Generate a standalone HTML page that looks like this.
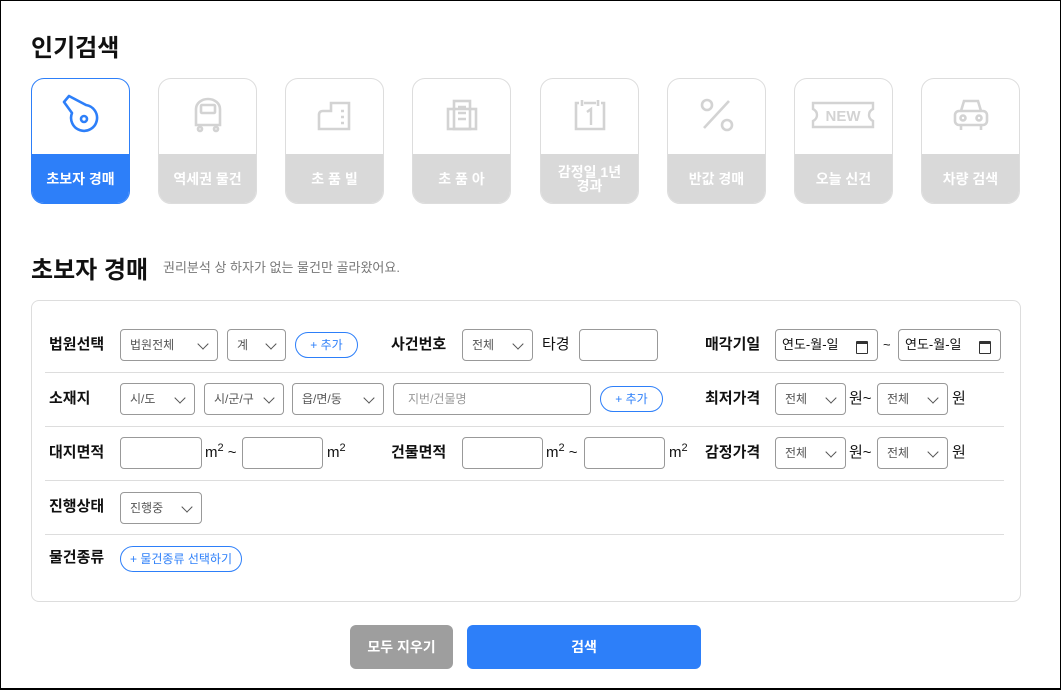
<!DOCTYPE html>
<html><head><meta charset="utf-8"><style>
*{box-sizing:border-box;margin:0;padding:0}
body{width:1061px;height:690px;background:#fff;font-family:"Liberation Sans","Noto Sans CJK KR",sans-serif;position:relative;overflow:hidden;color:#111}
.frame{position:absolute;left:0;top:0;width:1061px;height:690px;border:1px solid #000;border-bottom:2px solid #000}
.a{position:absolute}
h1{position:absolute;font-size:24px;font-weight:700;color:#111}
.card{position:absolute;top:78px;width:99px;height:126px;border:1px solid #ddd;border-radius:13px;overflow:hidden;background:#fff}
.card .lb{position:absolute;left:0;right:0;top:75px;bottom:0;background:#d9d9d9;color:#fff;font-weight:700;font-size:14px;display:flex;align-items:center;justify-content:center;text-align:center;line-height:14px}
.card svg{position:absolute;left:29px;top:16px}
.card.on{border-color:#2d7ff9}
.card.on .lb{background:#2d7ff9}
.panel{position:absolute;left:31px;top:300px;width:990px;height:302px;border:1px solid #ddd;border-radius:8px}
.sep{position:absolute;left:45px;width:959px;height:1px;background:#ddd}
.lab{position:absolute;font-size:15px;font-weight:700;color:#111;line-height:20px}
.sel,.inp{position:absolute;height:32px;border:1px solid #999;border-radius:4px;font-size:12px;color:#555;padding-left:9px;line-height:30px;background:#fff}
.sel::after{content:"";position:absolute;right:10px;top:10px;width:7px;height:7px;border-right:1.3px solid #555;border-bottom:1.3px solid #555;transform:rotate(45deg)}
.btn{position:absolute;height:26px;border:1px solid #2d7ff9;border-radius:13px;color:#2d7ff9;font-size:12px;text-align:center;line-height:24px;background:#fff}
.t{position:absolute;font-size:15px;color:#111;line-height:20px}
.t sup{font-size:11px;vertical-align:6px;line-height:0}
.date{position:absolute;height:32px;border:1px solid #999;border-radius:4px;font-size:13px;color:#111;padding-left:6px;line-height:30px}
.date::after{content:"";position:absolute;right:9px;top:11px;width:10px;height:9px;border:1.5px solid #333;border-top-width:3px;border-radius:1px}
</style></head><body>
<div class="frame"></div>
<h1 style="left:31px;top:28px">인기검색</h1>

<div class="card on" style="left:31px"><svg width="40" height="44" viewBox="0 0 40 44" style="left:30px;top:15px" fill="none" stroke="#2d7ff9" stroke-width="2.6" stroke-linejoin="round"><path d="M2 8 L7 2 L24 11 A13 13 0 1 1 10 19 Z"/><circle cx="22" cy="25" r="3"/></svg><div class="lb">초보자 경매</div></div>
<div class="card" style="left:158px"><svg width="40" height="40" viewBox="0 0 40 40" fill="none" stroke="#d3d3d3" stroke-width="2.6"><path d="M8 30 V14 A12 10 0 0 1 32 14 V30 Z"/><rect x="13" y="10" width="14" height="8" rx="1"/><circle cx="12" cy="34" r="2"/><circle cx="28" cy="34" r="2"/></svg><div class="lb">역세권 물건</div></div>
<div class="card" style="left:285px"><svg width="40" height="40" viewBox="0 0 40 40" fill="none" stroke="#d3d3d3" stroke-width="2.6"><path d="M4 34 V20 Q4 16 8 16 H16 V8 H34 V34 Z"/><path d="M26 16h3M26 22h3M26 28h3"/></svg><div class="lb">초 품 빌</div></div>
<div class="card" style="left:412px"><svg width="40" height="40" viewBox="0 0 40 40" fill="none" stroke="#d3d3d3" stroke-width="2.6"><rect x="6" y="14" width="28" height="20"/><rect x="12" y="6" width="16" height="28"/><path d="M16 12h8M16 18h8M16 24h8"/></svg><div class="lb">초 품 아</div></div>
<div class="card" style="left:540px"><svg width="40" height="40" viewBox="0 0 40 40" fill="none" stroke="#d3d3d3" stroke-width="2.6"><path d="M9 8 H6 V34 H34 V8 H31 M14 8 H26 M12 5 V11 M28 5 V11"/><path d="M17 17 L21 14 V30" stroke-width="2.4"/></svg><div class="lb">감정일 1년<br>경과</div></div>
<div class="card" style="left:667px"><svg width="40" height="40" viewBox="0 0 40 40" fill="none" stroke="#d3d3d3" stroke-width="2.6"><circle cx="10" cy="10" r="5"/><circle cx="30" cy="30" r="5"/><path d="M32 6 L7 33"/></svg><div class="lb">반값 경매</div></div>
<div class="card" style="left:794px"><svg width="70" height="40" viewBox="0 0 70 40" style="left:14px" fill="none" stroke="#d3d3d3" stroke-width="2.4"><path d="M4 8 H64 V14 Q60 16 60 20 Q60 24 64 26 V32 H4 V26 Q8 24 8 20 Q8 16 4 14 Z"/><text x="34" y="26" text-anchor="middle" font-family="Liberation Sans" font-weight="700" font-size="15" fill="#d3d3d3" stroke="none">NEW</text></svg><div class="lb">오늘 신건</div></div>
<div class="card" style="left:921px"><svg width="40" height="40" viewBox="0 0 40 40" fill="none" stroke="#d3d3d3" stroke-width="2.6"><path d="M10 16 L13 6 H27 L30 16"/><rect x="4" y="16" width="32" height="14" rx="4"/><circle cx="12" cy="23" r="2.5"/><circle cx="28" cy="23" r="2.5"/><path d="M10 30v5M30 30v5"/></svg><div class="lb">차량 검색</div></div>

<h1 style="left:31px;top:250px">초보자 경매</h1>
<div class="a" style="left:163px;top:257px;font-size:13px;color:#777">권리분석 상 하자가 없는 물건만 골라왔어요.</div>

<div class="panel"></div>
<div class="sep" style="top:372px"></div>
<div class="sep" style="top:426px"></div>
<div class="sep" style="top:480px"></div>
<div class="sep" style="top:534px"></div>

<div class="lab" style="left:49px;top:335px">법원선택</div>
<div class="sel" style="left:120px;top:329px;width:98px">법원전체</div>
<div class="sel" style="left:227px;top:329px;width:59px">계</div>
<div class="btn" style="left:295px;top:332px;width:63px">+ 추가</div>
<div class="lab" style="left:391px;top:335px">사건번호</div>
<div class="sel" style="left:462px;top:329px;width:71px">전체</div>
<div class="t" style="left:542px;top:335px">타경</div>
<div class="inp" style="left:579px;top:329px;width:79px"></div>
<div class="lab" style="left:705px;top:335px">매각기일</div>
<div class="date" style="left:775px;top:329px;width:103px">연도-월-일</div>
<div class="t" style="left:883px;top:335px;font-size:13px">~</div>
<div class="date" style="left:898px;top:329px;width:103px">연도-월-일</div>

<div class="lab" style="left:49px;top:389px">소재지</div>
<div class="sel" style="left:120px;top:383px;width:75px">시/도</div>
<div class="sel" style="left:204px;top:383px;width:80px">시/군/구</div>
<div class="sel" style="left:292px;top:383px;width:92px">읍/면/동</div>
<div class="inp" style="left:393px;top:383px;width:198px;color:#999;padding-left:14px">지번/건물명</div>
<div class="btn" style="left:600px;top:386px;width:63px">+ 추가</div>
<div class="lab" style="left:705px;top:389px">최저가격</div>
<div class="sel" style="left:775px;top:383px;width:71px">전체</div>
<div class="t" style="left:849px;top:389px">원~</div>
<div class="sel" style="left:877px;top:383px;width:71px">전체</div>
<div class="t" style="left:952px;top:389px">원</div>

<div class="lab" style="left:49px;top:443px">대지면적</div>
<div class="inp" style="left:120px;top:437px;width:82px"></div>
<div class="t" style="left:205px;top:443px">m<sup>2</sup> ~</div>
<div class="inp" style="left:242px;top:437px;width:81px"></div>
<div class="t" style="left:327px;top:443px">m<sup>2</sup></div>
<div class="lab" style="left:391px;top:443px">건물면적</div>
<div class="inp" style="left:462px;top:437px;width:81px"></div>
<div class="t" style="left:546px;top:443px">m<sup>2</sup> ~</div>
<div class="inp" style="left:584px;top:437px;width:81px"></div>
<div class="t" style="left:669px;top:443px">m<sup>2</sup></div>
<div class="lab" style="left:705px;top:443px">감정가격</div>
<div class="sel" style="left:775px;top:437px;width:71px">전체</div>
<div class="t" style="left:849px;top:443px">원~</div>
<div class="sel" style="left:877px;top:437px;width:71px">전체</div>
<div class="t" style="left:952px;top:443px">원</div>

<div class="lab" style="left:49px;top:497px">진행상태</div>
<div class="sel" style="left:120px;top:492px;width:82px">진행중</div>

<div class="lab" style="left:49px;top:548px">물건종류</div>
<div class="btn" style="left:120px;top:546px;width:122px">+ 물건종류 선택하기</div>

<div class="a" style="left:350px;top:625px;width:103px;height:44px;background:#9e9e9e;border-radius:6px;color:#fff;font-size:14px;font-weight:700;text-align:center;line-height:44px">모두 지우기</div>
<div class="a" style="left:467px;top:625px;width:234px;height:44px;background:#2d7ff9;border-radius:6px;color:#fff;font-size:14px;font-weight:700;text-align:center;line-height:44px">검색</div>
</body></html>
